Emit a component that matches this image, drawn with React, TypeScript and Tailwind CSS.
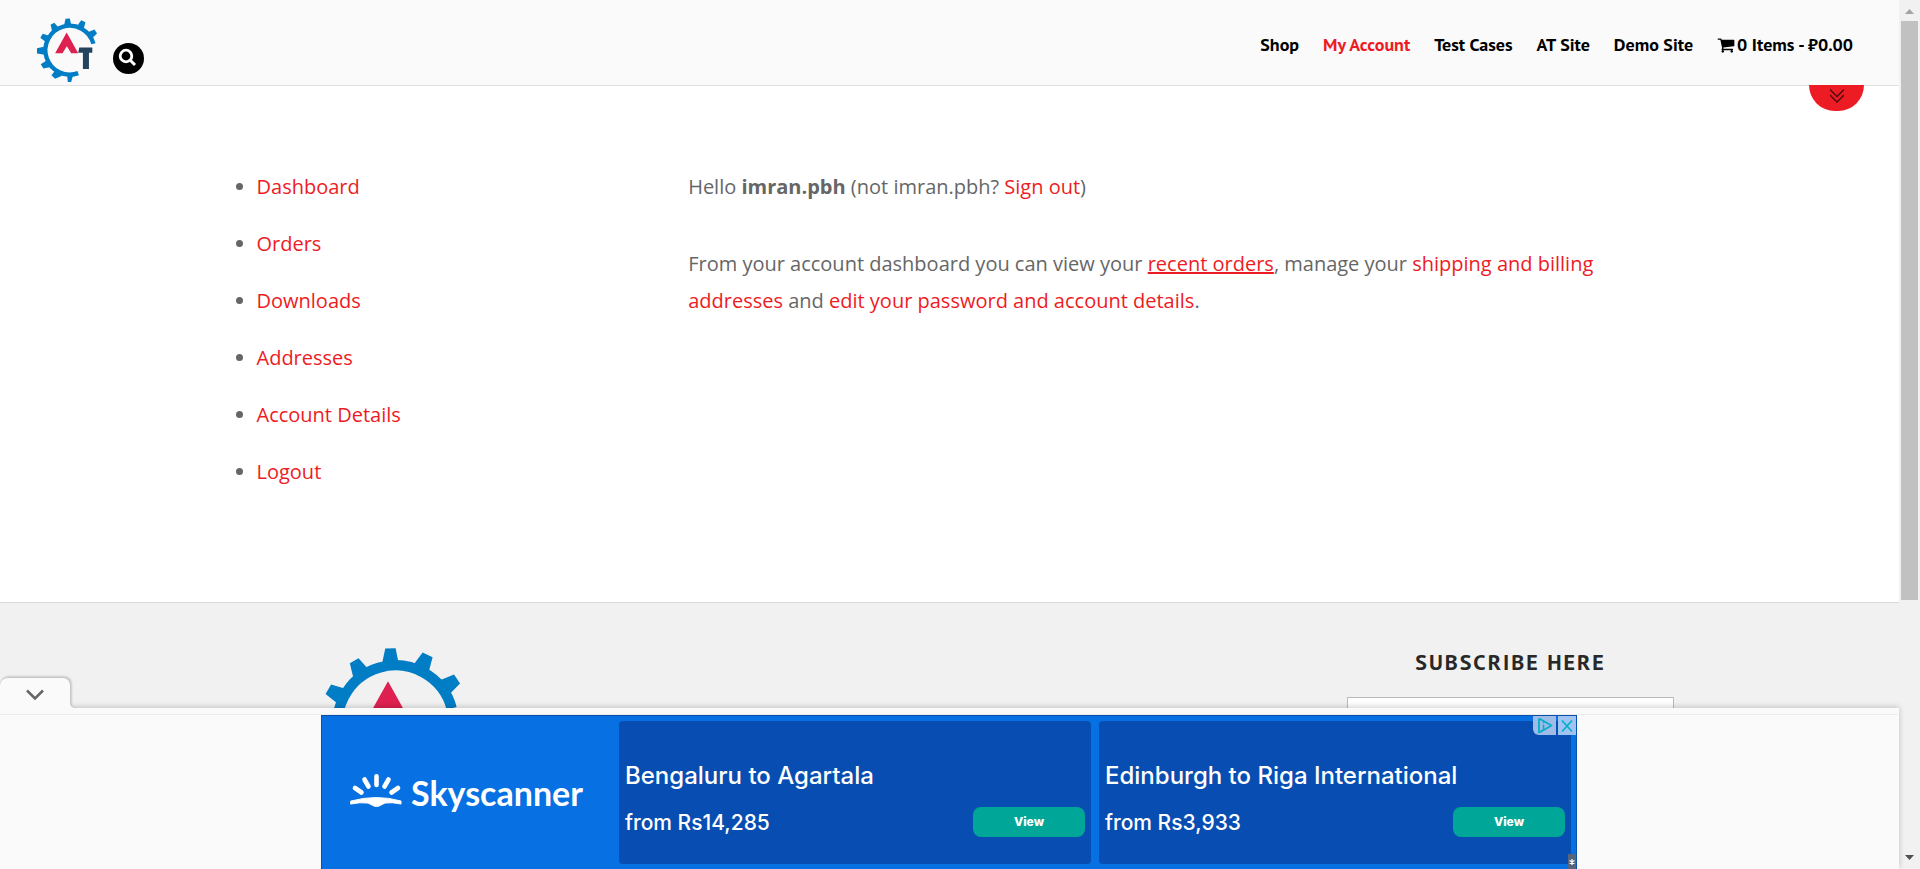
import React from "react";

const navFont = "font-['PT_Sans','Lato',sans-serif]";
const link = "text-[#ed1c24]";

function AtLogo({ className }: { className: string }) {
  return (
    <svg viewBox="109 55 186 191" className={className} role="img" aria-label="Automation Testing">
      <g fill="#007dc5">
        <path
          d="M279.5 132 A73 73 0 1 0 234 219.6"
          fill="none"
          stroke="#007dc5"
          strokeWidth="13"
        />
        <path d="M196 57 L209 56.5 L213 76 L192 76Z" />
        <path d="M243 62 L255.500 68 L251 85 L231 78Z" />
        <path d="M282.500 89.500 L290 101 L278 113 L264 97Z" />
        <path d="M162.500 69 L151.500 75.500 L156 94 L174 82Z" />
        <path d="M128 102 L121 114 L136 126 L145 107Z" />
        <path d="M111 145 L111 161 L134 165 L131 141Z" />
        <path d="M122 193 L130 206 L152 201 L141 181Z" />
        <path d="M154 226 L165 236 L186 227 L166 211Z" />
        <path d="M201 229 L203 246 L213 246 L218 228Z" />
      </g>
      <path d="M199.500 98 L234 160 L213 160 L200 139 L187 160 L165 160Z" fill="#de2150" />
      <path d="M237 143H276V159H266V207H248V159H234Z" fill="#23445c" />
    </svg>
  );
}

function Header() {
  const items = ["Shop", "My Account", "Test Cases", "AT Site", "Demo Site"];
  return (
    <header className="relative flex h-[86px] shrink-0 items-start justify-between border-b border-[#e1e1e1] bg-[#fafafa] pl-9 pr-[46px]">
      <div className="flex gap-[14px]">
        <a href="#home" className="mt-[18px]">
          <AtLogo className="h-16 w-[63px]" />
        </a>
        <button
          type="button"
          aria-label="Search"
          className="mt-[43px] flex size-[31px] items-center justify-center rounded-full bg-black"
        >
          <svg viewBox="0 0 31 31" className="size-[31px]" fill="none" stroke="#fff">
            <circle cx="13" cy="13" r="5.800" strokeWidth="2.800" />
            <path d="M17.500 17.500L22 22" strokeWidth="3" />
          </svg>
        </button>
      </div>
      <nav className={`mt-8 flex items-center gap-6 text-[18px] leading-[26px] font-bold text-black ${navFont}`}>
        {items.map((item) => (
          <a key={item} href="#nav" className={item === "My Account" ? link : ""}>
            {item}
          </a>
        ))}
        <a href="#cart" className="flex items-center gap-[2px]">
          <svg viewBox="0 0 1792 1792" className="size-[18px]" fill="currentColor" aria-hidden="true">
            <path d="M704 1536q0 52-38 90t-90 38-90-38-38-90 38-90 90-38 90 38 38 90zm896 0q0 52-38 90t-90 38-90-38-38-90 38-90 90-38 90 38 38 90zm128-1088v512q0 24-16.500 42.500t-40.500 21.500l-1044 122q13 60 13 70 0 16-24 64h920q26 0 45 19t19 45-19 45-45 19h-1024q-26 0-45-19t-19-45q0-11 8-31.500t16-36 21.500-40 15.500-29.500l-177-823h-204q-26 0-45-19t-19-45 19-45 45-19h256q16 0 28.500 6.500t19.500 15.500 13 24.500 8 26 5.500 29.500 4.500 26h1201q26 0 45 19t19 45z" />
          </svg>
          <span>0 Items - ₽0.00</span>
        </a>
      </nav>
      <button
        type="button"
        aria-label="Show panel"
        className="absolute right-[35px] top-[85px] flex h-[26px] w-[55px] justify-center rounded-b-full bg-[#ed1c24]"
      >
        <svg viewBox="0 0 14 16" className="mt-[3px] h-4 w-[14px]" fill="none" stroke="#4a0a0c" strokeWidth="1.300">
          <path d="M0 1.500L7 8.500L14 1.500M0 7L7 14L14 7" />
        </svg>
      </button>
    </header>
  );
}

function Account() {
  const items = ["Dashboard", "Orders", "Downloads", "Addresses", "Account Details", "Logout"];
  return (
    <main className="mx-auto flex h-[516px] w-full max-w-[1452px] shrink-0 justify-between pt-[82px] text-[20px] leading-[37px] text-[#666]">
      <ul className="flex w-[30%] list-disc flex-col gap-5 pl-[33px]">
        {items.map((item) => (
          <li key={item}>
            <a href="#account" className={link}>{item}</a>
          </li>
        ))}
      </ul>
      <div className="flex w-[68%] flex-col gap-10">
        <p>
          Hello <strong>imran.pbh</strong> (not imran.pbh? <a href="#out" className={link}>Sign out</a>)
        </p>
        <p>
          From your account dashboard you can view your{" "}
          <a href="#orders" className={`underline ${link}`}>recent orders</a>, manage your{" "}
          <a href="#addresses" className={link}>shipping and billing addresses</a> and{" "}
          <a href="#details" className={link}>edit your password and account details</a>.
        </p>
      </div>
    </main>
  );
}

function Footer() {
  return (
    <footer className="flex flex-1 items-start justify-between border-t border-[#d8d8d8] bg-[#f1f1f1] pl-[316px] pr-[225px]">
      <AtLogo className="mt-11 h-[152px] w-[148px] shrink-0" />
      <div className="flex w-[327px] flex-col items-center">
        <h2 className={`mt-[43px] text-[22px] leading-8 font-bold tracking-[2px] text-[#282828] ${navFont}`}>
          SUBSCRIBE HERE
        </h2>
        <input
          type="email"
          aria-label="Email address"
          className="mt-[19px] h-12 w-full border border-[#bbb] bg-white px-3"
        />
      </div>
    </footer>
  );
}

function Offer({ route, price }: { route: string; price: string }) {
  return (
    <div className="flex h-[143px] flex-1 flex-col rounded-sm bg-[#084eb2] px-[6px] pt-[39px] font-['Inter',sans-serif] font-medium text-white">
      <div className="text-[24px] leading-8">{route}</div>
      <div className="mt-[13px] flex items-center justify-between">
        <span className="pt-[2px] text-[21px] leading-8">{price}</span>
        <button
          type="button"
          className="h-[30px] w-[112px] rounded-lg bg-[#00a698] text-[12px] font-extrabold"
        >
          View
        </button>
      </div>
    </div>
  );
}

function AdBar() {
  return (
    <aside className="absolute inset-x-0 bottom-0">
      <div className="relative z-10 flex items-end">
        <button
          type="button"
          aria-label="Collapse"
          className="flex h-[31px] w-[71px] items-center justify-center rounded-t-lg border-t border-r border-[#c8c8c8] bg-[#fafafa] pt-1 shadow-[1px_-1px_2px_rgba(0,0,0,0.15)]"
        >
          <svg viewBox="0 0 20 12" className="h-3 w-5" fill="none" stroke="#666" strokeWidth="2.500">
            <path d="M2 1.500L10 9.500L18 1.500" />
          </svg>
        </button>
        <svg viewBox="0 0 6 6" className="-ml-px size-[6px]" aria-hidden="true">
          <path d="M0 0Q0 6 6 6H0Z" fill="#fafafa" />
          <path d="M0.500 0Q0.500 5.500 6 5.500" fill="none" stroke="#c8c8c8" />
        </svg>
      </div>
      <div className="relative bg-[#fafafa] pr-px shadow-[0_-1px_6px_rgba(0,0,0,0.2)]">
        <div className="h-[7px] border-b border-[#ececec]" />
        <div className="relative mx-auto flex h-[154px] w-[1256px] items-start gap-2 border-x border-t border-[#0a4fa8] bg-[#0770e3] pr-[5px] pt-[5px]">
          <div className="flex h-[143px] w-[289px] items-center gap-2 pl-7 text-white">
            <svg viewBox="350 773 53 40" className="h-10 w-[53px]" fill="none" stroke="#fff" strokeWidth="4.600" strokeLinecap="round">
              <path d="M376.500 776.300V785M364.500 779.500L368.500 786.500M388.500 779.500L384.500 786.500M355 788L361.500 792.500M398 788L391.500 792.500" />
              <path d="M351 801Q376.500 794 401 801L401 804Q392 802 385 803L379 806Q376.500 807 374 806L368 803Q360 802 351 804Z" fill="#fff" strokeWidth="1" strokeLinejoin="round" />
            </svg>
            <span className="font-['Lato',sans-serif] text-[34px] leading-10 font-bold">Skyscanner</span>
          </div>
          <Offer route="Bengaluru to Agartala" price="from Rs14,285" />
          <Offer route="Edinburgh to Riga International" price="from Rs3,933" />
          <div className="absolute right-0 top-0 flex gap-[2px]">
            <button type="button" aria-label="Ad choices" className="flex h-[19px] w-[23px] items-center justify-center rounded-bl-md bg-[#a0bce6]">
              <svg viewBox="0 0 16 17" className="h-[17px] w-4" fill="none" stroke="#00aecd" strokeWidth="1.800" strokeLinejoin="round">
                <path d="M2 1.500L14.500 8.500L5 14V12.500M2 1.500V15.500L5 14" />
                <path d="M6.500 7.500V12M6.500 4.800V6.200" strokeWidth="1.600" />
              </svg>
            </button>
            <button type="button" aria-label="Close ad" className="flex h-[19px] w-[18px] items-center justify-center bg-[#a0c4f2]">
              <svg viewBox="0 0 12 12" className="size-3" fill="none" stroke="#00aecd" strokeWidth="1.600">
                <path d="M1 0.500L11 11.500M11 0.500L1 11.500" />
              </svg>
            </button>
          </div>
          <div className="absolute bottom-0 right-0 flex h-[15px] w-2 items-center justify-center bg-[#56657c]">
            <svg viewBox="0 0 6 6" className="size-[6px]" stroke="#fff" strokeWidth="1.200">
              <path d="M3 0V6M0.500 1.500L5.500 4.500M5.500 1.500L0.500 4.500" />
            </svg>
          </div>
        </div>
      </div>
    </aside>
  );
}

function Scrollbar() {
  return (
    <div className="flex w-[21px] shrink-0 flex-col items-center bg-[#f1f1f1]" aria-hidden="true">
      <svg viewBox="0 0 21 21" className="size-[21px] shrink-0">
        <path d="M6 14L10.500 9L15 14Z" fill="#a3a3a3" />
      </svg>
      <div className="h-[579px] w-[17px] bg-[#c1c1c1]" />
      <svg viewBox="0 0 21 21" className="mt-auto size-[21px] shrink-0">
        <path d="M6 7L10.500 12L15 7Z" fill="#505050" />
      </svg>
    </div>
  );
}

export default function App() {
  return (
    <div className="flex h-screen overflow-hidden bg-white font-['Open_Sans',sans-serif]">
      <div className="relative flex min-w-0 flex-1 flex-col">
        <Header />
        <Account />
        <Footer />
        <AdBar />
      </div>
      <Scrollbar />
    </div>
  );
}
